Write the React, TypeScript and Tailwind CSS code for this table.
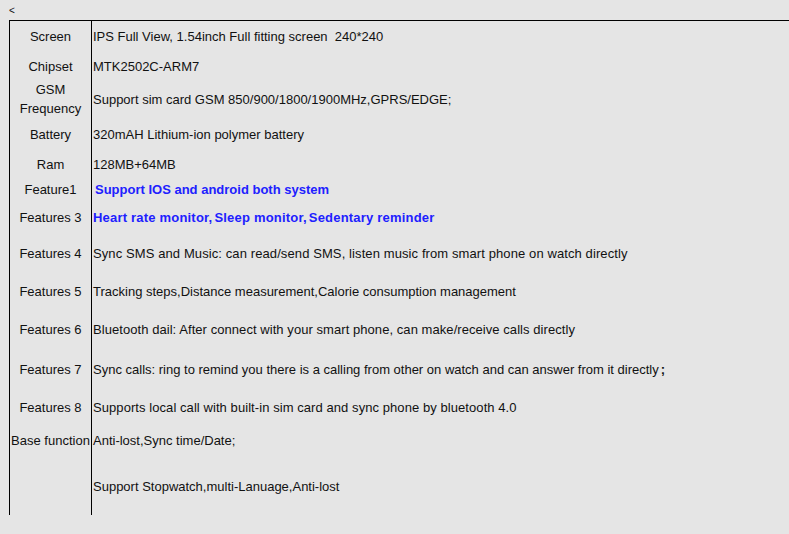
import React from "react";

type Row = { label: React.ReactNode; value: React.ReactNode; h: string; blue?: boolean; track?: string; top?: boolean; lpb?: string };

const Gap = () => <span className="inline-block w-[2px]" />;

const rows: Row[] = [
  { label: "Screen", value: "IPS Full View, 1.54inch Full fitting screen\u00a0\u00a0240*240", h: "h-[30px]" },
  { label: "Chipset", value: "MTK2502C-ARM7", h: "h-[31px]" },
  { label: <>GSM<br />Frequency</>, value: "Support sim card GSM 850/900/1800/1900MHz,GPRS/EDGE;", h: "h-[35px]", lpb: "pb-[2px]" },
  { label: "Battery", value: "320mAH Lithium-ion polymer battery", h: "h-[35px]" },
  { label: "Ram", value: "128MB+64MB", h: "h-[25px]" },
  { label: "Feature1", value: <span className="pl-[2px]">Support IOS and android both system</span>, h: "h-[25px]", blue: true },
  {
    label: "Features 3",
    value: (
      <span className="tracking-[0.2px]">
        Heart rate monitor,<Gap />Sleep monitor,<Gap />Sedentary reminder
      </span>
    ),
    h: "h-[31px]",
    blue: true,
  },
  { label: "Features 4", value: "Sync SMS and Music: can read/send SMS, listen music from smart phone on watch directly", h: "h-[41px]", track: "tracking-[0.1px]" },
  { label: "Features 5", value: "Tracking steps,Distance measurement,Calorie consumption management", h: "h-[35px]" },
  { label: "Features 6", value: "Bluetooth dail: After connect with your smart phone, can make/receive calls directly", h: "h-[41px]", track: "tracking-[0.06px]" },
  {
    label: "Features 7",
    value: (
      <span>
        Sync calls: ring to remind you there is a calling from other on watch and can answer from it directly
        <span className="ml-[2px] font-bold">;</span>
      </span>
    ),
    h: "h-[39px]",
  },
  { label: "Features 8", value: "Supports local call with built-in sim card and sync phone by bluetooth 4.0", h: "h-[37px]", track: "tracking-[0.07px]" },
  { label: "Base function", value: "Anti-lost,Sync time/Date;", h: "h-[29px]" },
  { label: "", value: "Support Stopwatch,multi-Lanuage,Anti-lost", h: "h-[60px]", top: true },
];

export default function App() {
  return (
    <div
      className="w-[789px] h-[534px] bg-[#e5e5e5] text-[#111] overflow-hidden"
      style={{ fontFamily: '"Liberation Sans", Arial, sans-serif' }}
    >
      <div className="h-[20px] pl-[9px] pt-[5px] text-[10px] leading-[12px]">&lt;</div>
      <div className="ml-[9px] border-l border-t border-black flex flex-col">
        {rows.map((r, i) => (
          <div key={i} className={`flex ${r.h}`}>
            <div
              className={`w-[82px] shrink-0 border-r border-black flex items-center justify-center text-center text-[13px] leading-[19px] whitespace-nowrap ${r.lpb ?? ""}`}
            >
              <span>{r.label}</span>
            </div>
            <div
              className={`flex-1 flex pl-[1px] text-[13px] leading-[19px] whitespace-nowrap ${
                r.top ? "items-start pt-[22px]" : "items-center"
              } ${r.blue ? "font-bold text-[#2020ff]" : ""} ${r.track ?? ""}`}
            >
              {r.value}
            </div>
          </div>
        ))}
      </div>
    </div>
  );
}
